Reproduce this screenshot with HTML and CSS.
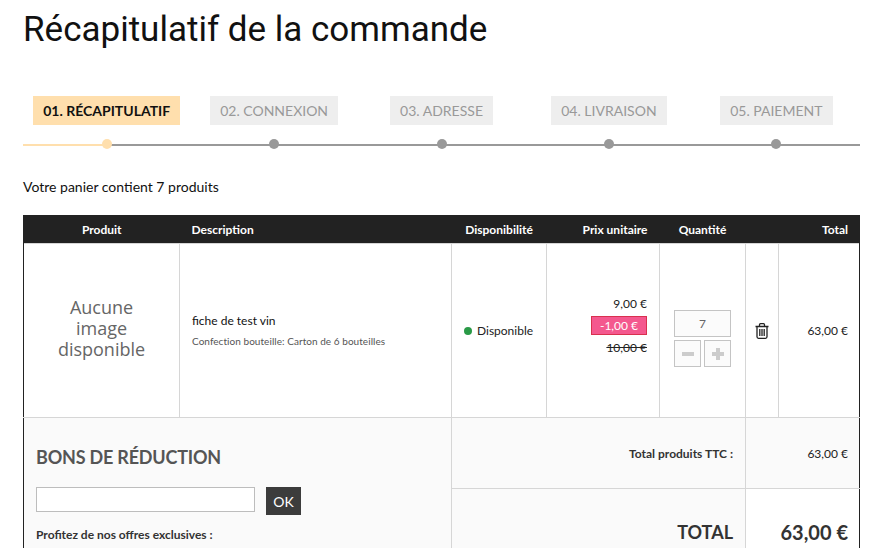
FILE: index.html
```html
<!DOCTYPE html>
<html lang="fr">
<head>
<meta charset="utf-8">
<title>Récapitulatif de la commande</title>
<link rel="stylesheet" href="styles.css">
</head>
<body>
<h1 class="title">Récapitulatif de la commande</h1>
<ol class="steps">
  <li class="step step-active"><span class="step-label">01. RÉCAPITULATIF</span></li>
  <li class="step"><span class="step-label">02. CONNEXION</span></li>
  <li class="step"><span class="step-label">03. ADRESSE</span></li>
  <li class="step"><span class="step-label">04. LIVRAISON</span></li>
  <li class="step"><span class="step-label">05. PAIEMENT</span></li>
</ol>
<p class="summary">Votre panier contient 7 produits</p>
<table class="cart">
  <colgroup>
    <col class="c-img"><col class="c-desc"><col class="c-avail"><col class="c-price"><col class="c-qty"><col class="c-del"><col class="c-total">
  </colgroup>
  <thead>
    <tr>
      <th class="center">Produit</th>
      <th class="left">Description</th>
      <th class="center">Disponibilité</th>
      <th class="right">Prix unitaire</th>
      <th class="center">Quantité</th>
      <th></th>
      <th class="right">Total</th>
    </tr>
  </thead>
  <tbody>
    <tr class="product">
      <td class="noimg">Aucune<br>image<br>disponible</td>
      <td class="desc">
        <div class="pname">fiche de test vin</div>
        <div class="pattr">Confection bouteille: Carton de 6 bouteilles</div>
      </td>
      <td class="avail"><span class="dot"></span>Disponible</td>
      <td class="right price">
        <div>9,00 €</div>
        <div class="reduction">-1,00 €</div>
        <div class="old">10,00 €</div>
      </td>
      <td class="qty">
        <div class="qty-box">
          <input class="qty-input" type="text" value="7">
          <div class="qty-btns">
            <span class="qty-btn"><svg viewBox="0 0 12 12" width="12" height="12"><rect x="0" y="4" width="12" height="4" fill="#ccc"/></svg></span>
            <span class="qty-btn"><svg viewBox="0 0 12 12" width="12" height="12"><path d="M4 0h4v4h4v4H8v4H4V8H0V4h4z" fill="#ccc"/></svg></span>
          </div>
        </div>
      </td>
      <td class="del">
        <svg viewBox="0 0 14 16" width="14" height="16" fill="none" stroke="#222" stroke-width="1.3"><path d="M0.5 3.5h13M4.5 3.5V1.7q0-1 1-1h3q1 0 1 1v1.8M2 3.5v10.3q0 1.5 1.5 1.5h7q1.5 0 1.5-1.5V3.5M4.8 6v7M7 6v7M9.2 6v7"/></svg>
      </td>
      <td class="right amount">63,00 €</td>
    </tr>
    <tr class="subtotal">
      <td class="voucher" colspan="2" rowspan="2">
        <h2 class="voucher-title">BONS DE RÉDUCTION</h2>
        <div class="voucher-form">
          <input class="voucher-input" type="text">
          <button class="voucher-btn" type="button">OK</button>
        </div>
        <p class="voucher-note">Profitez de nos offres exclusives :</p>
      </td>
      <td class="right sub-label" colspan="3">Total produits TTC :</td>
      <td class="right amount" colspan="2">63,00 €</td>
    </tr>
    <tr class="grand">
      <td class="right grand-label" colspan="3">TOTAL</td>
      <td class="right grand-amount" colspan="2">63,00 €</td>
    </tr>
  </tbody>
</table>
</body>
</html>
```
FILE: styles.css
```css
html, body { margin: 0; padding: 0; height: 548px; overflow: hidden; background: #fff; }
body { padding: 0 23px; font-family: "Lato", sans-serif; color: #111; font-size: 13px; }

.title { margin: 0; padding-top: 10px; font-family: "Roboto", sans-serif; font-weight: 400; font-size: 35px; line-height: 40px; color: #111; }

.steps { list-style: none; margin: 46px 0 0; padding: 0; display: flex; }
.step { flex: 1 1 0; display: flex; flex-direction: column; align-items: center; height: 48px; border-bottom: 2px solid #999; position: relative; }
.step::after { content: ""; position: absolute; left: 50%; bottom: -5px; width: 10px; height: 10px; margin-left: -5px; border-radius: 50%; background: #999; }
.step-active::before { content: ""; position: absolute; left: 0; width: 50%; bottom: -2px; height: 2px; background: #ffdfad; }
.step-active::after { background: #ffdfad; z-index: 1; }
.step-label { height: 29px; line-height: 29px; padding: 0 10px; background: #eee; color: #999; font-size: 14px; white-space: nowrap; }
.step-active .step-label { background: #ffdfad; color: #111; font-weight: 700; }

.summary { margin: 32px 0 0; font-size: 14px; line-height: 17px; color: #111; }

.cart { margin-top: 20px; width: 836px; border-collapse: collapse; table-layout: fixed; border-left: 1px solid #222; border-right: 1px solid #222; }
.c-img { width: 156px; } .c-desc { width: 272px; } .c-avail { width: 95px; } .c-price { width: 113px; } .c-qty { width: 86px; } .c-del { width: 33px; } .c-total { width: 81px; }
.cart th { background: #222; color: #fff; height: 28px; box-sizing: border-box; padding: 1px 12px 0; font-size: 12px; font-weight: 700; line-height: 27px; white-space: nowrap; }
.cart th:last-child { padding-right: 11px; }
.cart td { border: 1px solid #d6d6d6; padding: 0 12px; vertical-align: middle; }
.cart .center { text-align: center; }
.cart .left { text-align: left; }
.cart .right { text-align: right; }
.cart td:last-child { padding-right: 11px; border-right-color: #222; }

.product td { height: 174px; box-sizing: border-box; }
.cart .noimg { padding: 0 0 4px; text-align: center; font-family: "Open Sans", sans-serif; font-size: 18px; line-height: 21px; color: #666; }
.pname { font-size: 12px; line-height: 16px; color: #111; }
.pattr { margin-top: 5px; font-size: 10px; line-height: 14px; letter-spacing: 0.05px; color: #555; }
.cart .avail { white-space: nowrap; padding-left: 12px; padding-right: 0; font-size: 12px; color: #222; }
.dot { display: inline-block; width: 8px; height: 8px; margin-right: 5px; border-radius: 50%; background: #2a9a47; }
.cart .price { font-size: 12px; line-height: 16px; color: #222; padding-bottom: 10px; }
.reduction { box-sizing: border-box; width: 56px; height: 19px; margin: 4px 0 5px auto; border: 1px solid #d9304f; background: #f4588e; color: #fff; text-align: center; line-height: 17px; }
.old { text-decoration: line-through; }
.cart .qty { padding: 16px 0 0; }
.qty-box { width: 57px; margin: 0 auto; display: flex; flex-direction: column; gap: 3px; }
.qty-input { box-sizing: border-box; width: 57px; height: 27px; padding: 0; border: 1px solid #c4c4c4; background: #fbfbfb; color: #666; font: 12px "Lato", sans-serif; text-align: center; }
.qty-btns { display: flex; justify-content: space-between; }
.qty-btn { box-sizing: border-box; width: 27px; height: 27px; border: 1px solid #c4c4c4; background: #fbfbfb; display: flex; align-items: center; justify-content: center; }
.cart .del { padding: 0; text-align: center; }
.del svg { display: block; margin: 0 auto; }
.amount { font-size: 12px; color: #222; }

.subtotal td, .grand td { background: #fafafa; }
.subtotal td { height: 71px; box-sizing: border-box; }
.cart .voucher { padding: 0 12px; vertical-align: top; border-bottom: 0; border-left-color: #222; }
.cart .noimg { border-left-color: #222; }
.voucher-title { margin: 27px 0 0; font-size: 18px; line-height: 24px; letter-spacing: -0.2px; font-weight: 700; color: #555; }
.voucher-form { margin-top: 18px; display: flex; align-items: flex-start; gap: 11px; }
.voucher-input { box-sizing: border-box; width: 219px; height: 25px; padding: 0 4px; border: 1px solid #bdbdbd; background: #fff; }
.voucher-btn { width: 35px; height: 28px; padding: 0; border: 0; background: #3c3c3c; color: #fff; font: 14px "Lato", sans-serif; }
.voucher-note { margin: 12px 0 0; font-size: 12px; line-height: 15px; font-weight: 700; color: #333; }
.sub-label { font-size: 12px; font-weight: 700; color: #333; }
.grand td { height: 59px; box-sizing: border-box; vertical-align: top; padding-top: 30px; border-bottom: 0; }
.grand-label { font-size: 18px; line-height: 26px; font-weight: 700; color: #333; }
.cart .grand-amount { font-size: 20px; line-height: 26px; font-weight: 700; color: #333; background: #fff; }
```
